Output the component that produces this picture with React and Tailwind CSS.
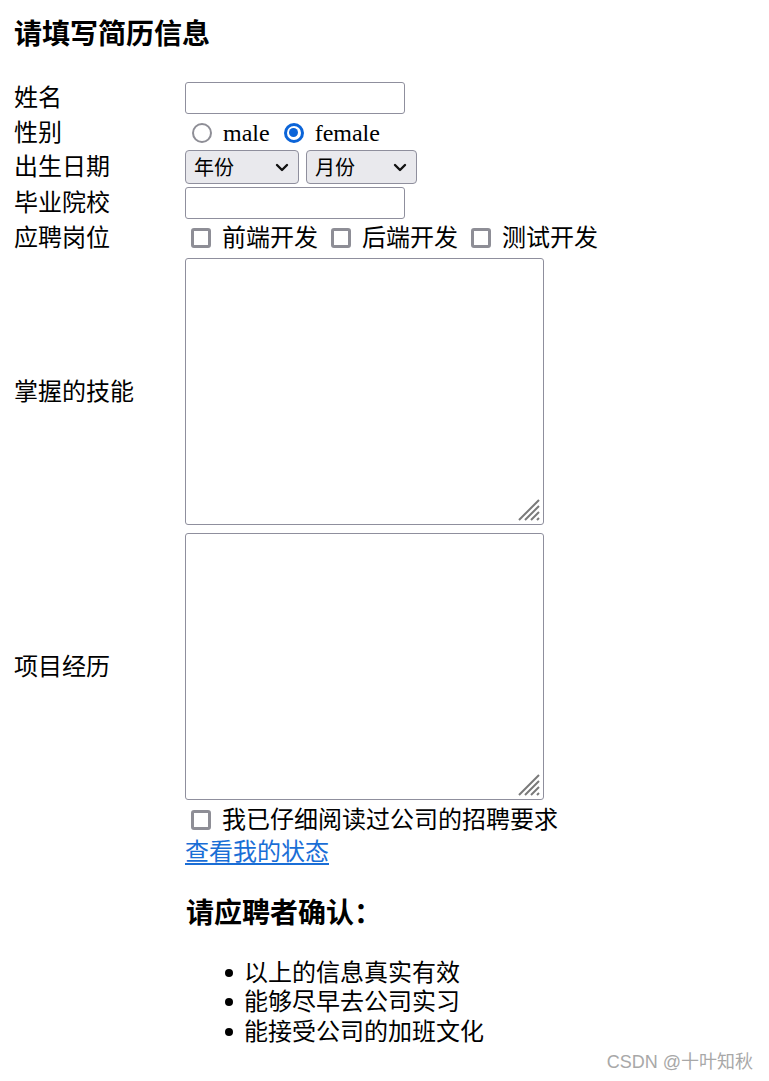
import React from 'react'

// Resume form: a plain two-column table of labels and controls

function TextBox() {
  return <div className="w-[220px] h-[32px] border border-[#8f8f9d] rounded-[3px] bg-white" />
}

function Radio({ checked }) {
  if (checked) {
    return (
      <span className="block w-[20px] h-[20px] rounded-full border-[3px] border-[#0b64d8] shrink-0 relative">
        <span className="absolute left-[2.5px] top-[2.5px] w-[9px] h-[9px] rounded-full bg-[#0b64d8]" />
      </span>
    )
  }
  return <span className="block w-[20px] h-[20px] rounded-full border-[2.5px] border-[#8e8e96] shrink-0" />
}

function Checkbox() {
  return <span className="block w-[20px] h-[20px] rounded-[3px] border-[3px] border-[#8e8e96] shrink-0" />
}

function Select({ label, wide }) {
  return (
    <div
      className={
        'h-[34px] rounded-[4px] border border-[#8f8f9d] bg-[#e9e9ed] flex items-center justify-between pl-[8px] pr-[9px] ' +
        (wide ? 'w-[111px]' : 'w-[114px]')
      }
    >
      <span className="font-['Noto_Sans_CJK_SC',sans-serif] text-[20px] leading-none">{label}</span>
      <svg width="14" height="9" viewBox="0 0 14 9" fill="none">
        <path d="M2 2 L7 7 L12 2" stroke="#111" strokeWidth="2.4" strokeLinecap="round" strokeLinejoin="round" />
      </svg>
    </div>
  )
}

function TextArea() {
  return (
    <div className="relative w-[359px] h-[267px] border border-[#8f8f9d] rounded-[3px] bg-white">
      <svg className="absolute right-[2px] bottom-[2px]" width="24" height="24" viewBox="0 0 24 24">
        <path d="M22 2 L2 22 M22 8 L8 22 M22 14 L14 22 M22 20 L20 22" stroke="#7a7a7a" strokeWidth="2" />
      </svg>
    </div>
  )
}

export default function App() {
  const jobs = ['前端开发', '后端开发', '测试开发']
  const rules = ['以上的信息真实有效', '能够尽早去公司实习', '能接受公司的加班文化']

  return (
    <div className="relative min-h-[1081px] bg-white text-black text-[24px] leading-[28px] font-['Liberation_Serif','Noto_Sans_CJK_SC',serif]">
      <div className="pl-[14px] pt-[18px]">
        <h3 className="text-[28px] font-bold leading-[34px]">请填写简历信息</h3>

        {/* ── Form rows ── */}
        <div className="mt-[30px] flex flex-col">
          <div className="flex items-center h-[32px]">
            <div className="w-[171px]">姓名</div>
            <TextBox />
          </div>

          <div className="flex items-center h-[31px] mt-[3px]">
            <div className="w-[171px]">性别</div>
            <div className="flex items-center">
              <span className="ml-[7px]"><Radio /></span>
              <span className="ml-[11px]">male</span>
              <span className="ml-[14px]"><Radio checked /></span>
              <span className="ml-[11px]">female</span>
            </div>
          </div>

          <div className="flex items-center h-[34px] mt-[2px]">
            <div className="w-[171px]">出生日期</div>
            <div className="flex items-center gap-[7px]">
              <Select label="年份" />
              <Select label="月份" wide />
            </div>
          </div>

          <div className="flex items-center h-[32px] mt-[3px]">
            <div className="w-[171px]">毕业院校</div>
            <TextBox />
          </div>

          <div className="flex items-center h-[31px] mt-[3px]">
            <div className="w-[171px]">应聘岗位</div>
            <div className="flex items-center pl-[6px] gap-[13px]">
              {jobs.map(j => (
                <div key={j} className="flex items-center gap-[11px]">
                  <Checkbox />
                  <span>{j}</span>
                </div>
              ))}
            </div>
          </div>

          <div className="flex items-center h-[267px] mt-[5px]">
            <div className="w-[171px]">掌握的技能</div>
            <TextArea />
          </div>

          <div className="flex items-center h-[267px] mt-[8px]">
            <div className="w-[171px]">项目经历</div>
            <TextArea />
          </div>

          <div className="flex items-center h-[30px] mt-[5px] pl-[177px] gap-[11px]">
            <Checkbox />
            <span>我已仔细阅读过公司的招聘要求</span>
          </div>

          <div className="flex items-center h-[30px] mt-[2px] pl-[171px]">
            <a href="#" className="text-[#1a6ed6] underline underline-offset-[3px]">查看我的状态</a>
          </div>
        </div>

        {/* ── Confirmation ── */}
        <h3 className="ml-[172px] mt-[30px] text-[28px] font-bold leading-[34px]">请应聘者确认：</h3>
        <ul className="ml-[211px] mt-[27px]">
          {rules.map(r => (
            <li key={r} className="flex items-center h-[29.5px]">
              <span className="w-[8px] h-[8px] rounded-full bg-black" />
              <span className="ml-[11px]">{r}</span>
            </li>
          ))}
        </ul>
      </div>

      <div className="absolute right-[16px] top-[1050px] text-[18px] leading-[24px] text-[#a8a8a8] font-['Liberation_Sans','Noto_Sans_CJK_SC',sans-serif]">
        CSDN @十叶知秋
      </div>
    </div>
  )
}
